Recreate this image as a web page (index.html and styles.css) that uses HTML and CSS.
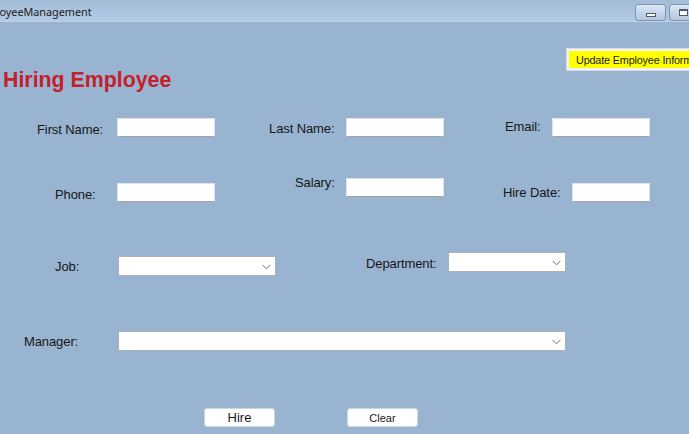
FILE: index.html
```html
<!DOCTYPE html>
<html lang="en">
<head>
<meta charset="utf-8">
<title>EmployeeManagement</title>
<link rel="stylesheet" href="styles.css">
</head>
<body>
<div class="window">
  <div class="titlebar">
    <span class="title-text">EmployeeManagement</span>
    <div class="caption-buttons">
      <div class="cap-btn cap-min"><span class="min-glyph"></span></div>
      <div class="cap-btn cap-max"><span class="max-glyph"></span></div>
    </div>
  </div>

  <div class="header-row">
    <h1 class="heading">Hiring Employee</h1>
    <button class="update-btn">Update Employee Information</button>
  </div>

  <div class="row row-1">
    <label class="lbl l-first">First Name:</label>
    <div class="textbox tb-first"></div>
    <label class="lbl l-last">Last Name:</label>
    <div class="textbox tb-last"></div>
    <label class="lbl l-email">Email:</label>
    <div class="textbox tb-email"></div>
  </div>

  <div class="row row-2">
    <label class="lbl l-phone">Phone:</label>
    <div class="textbox tb-phone"></div>
    <label class="lbl l-salary">Salary:</label>
    <div class="textbox tb-salary"></div>
    <label class="lbl l-hire">Hire Date:</label>
    <div class="textbox tb-hire"></div>
  </div>

  <div class="row row-3">
    <label class="lbl l-job">Job:</label>
    <div class="combo cb-job"><svg class="chev" width="9" height="6" viewBox="0 0 9 6"><path d="M0.5 0.8 L4.5 4.8 L8.5 0.8" fill="none" stroke="#707070" stroke-width="1"/></svg></div>
    <label class="lbl l-dept">Department:</label>
    <div class="combo cb-dept"><svg class="chev" width="9" height="6" viewBox="0 0 9 6"><path d="M0.5 0.8 L4.5 4.8 L8.5 0.8" fill="none" stroke="#707070" stroke-width="1"/></svg></div>
  </div>

  <div class="row row-4">
    <label class="lbl l-mgr">Manager:</label>
    <div class="combo cb-mgr"><svg class="chev" width="9" height="6" viewBox="0 0 9 6"><path d="M0.5 0.8 L4.5 4.8 L8.5 0.8" fill="none" stroke="#707070" stroke-width="1"/></svg></div>
  </div>

  <div class="row row-5">
    <button class="btn btn-hire">Hire</button>
    <button class="btn btn-clear">Clear</button>
  </div>
</div>
</body>
</html>
```

FILE: styles.css
```css
html, body {
  margin: 0;
  padding: 0;
  overflow: hidden;
}
body {
  width: 689px;
  height: 434px;
  background: #99b4d1;
  font-family: "Liberation Sans", Arial, sans-serif;
  color: #1a1a1a;
}
.window {
  width: 689px;
  height: 434px;
  overflow: hidden;
}

/* title bar */
.titlebar {
  height: 22px;
  display: flex;
  align-items: flex-start;
  background: linear-gradient(#a3bcd8, #b4cbe5);
  border-bottom: 1px solid #bdd2ea;
  box-sizing: border-box;
  overflow: hidden;
}
.title-text {
  font-family: "Noto Sans", "Open Sans", sans-serif;
  font-size: 10.8px;
  line-height: 24px;
  color: #1c1c1c;
  margin-left: -26px;
  flex: 0 0 auto;
}
.caption-buttons {
  display: flex;
  margin-left: auto;
  margin-top: 4px;
  margin-right: -20px;
  gap: 3px;
}
.cap-btn {
  width: 29px;
  height: 15px;
  border: 1px solid #7d93ae;
  border-radius: 3px;
  background: linear-gradient(#dde8f4, #c3d4e8 55%, #b3c7df);
  display: flex;
  align-items: center;
  justify-content: center;
  flex: 0 0 auto;
}
.cap-max {
  width: 38px;
}
.min-glyph {
  width: 8px;
  height: 2px;
  margin-top: 4px;
  background: #fff;
  border: 1px solid #4a5d74;
}
.max-glyph {
  width: 7px;
  height: 4px;
  background: #fff;
  border: 1px solid #4a5d74;
  border-top-width: 2px;
  margin-right: 11px;
}

/* header */
.header-row {
  display: flex;
  align-items: flex-start;
}
.heading {
  flex: 0 0 565px;
  margin: 46px 0 0 3px;
  font-family: "Liberation Sans", Arial, sans-serif;
  font-weight: bold;
  font-size: 21.33px;
  line-height: 24px;
  color: #c4202c;
}
.update-btn {
  flex: 0 0 auto;
  width: 150px;
  height: 21px;
  margin-top: 27px;
  margin-left: -1px;
  padding: 0 0 0 7px;
  background: #ffff00;
  border: 2px solid #f2f2f2;
  box-shadow: 0 0 0 1px #d9dde2;
  font-family: "Liberation Sans", Arial, sans-serif;
  font-size: 10.8px;
  letter-spacing: -0.15px;
  color: #1a1a1a;
  text-align: left;
  white-space: nowrap;
}

/* rows */
.row {
  display: flex;
  align-items: flex-start;
}
.row-1 { margin-top: 26px; }
.row-2 { margin-top: 38px; }
.row-3 { margin-top: 50px; }
.row-4 { margin-top: 55px; }
.row-5 { margin-top: 57px; }

.lbl {
  flex: 0 0 auto;
  font-size: 13px;
  line-height: 15px;
  color: #161616;
  white-space: nowrap;
  letter-spacing: -0.1px;
}

.textbox {
  flex: 0 0 auto;
  height: 19px;
  box-sizing: border-box;
  background: #fff;
  border: 1px solid #dde3ea;
  border-bottom: 1px solid #9ba4ae;
}
.combo {
  flex: 0 0 auto;
  height: 20px;
  box-sizing: border-box;
  background: #fff;
  border: 1px solid #a9b1bb;
  display: flex;
  align-items: center;
  justify-content: flex-end;
}
.chev {
  margin-right: 4px;
  margin-top: 1px;
}

/* row 1 */
.l-first { margin: 4px 0 0 37px; width: 80px; }
.tb-first { width: 98px; }
.l-last { margin: 3px 0 0 54px; width: 77px; }
.tb-last { width: 98px; }
.l-email { margin: 1px 0 0 61px; width: 47px; }
.tb-email { width: 98px; }

/* row 2 */
.l-phone { margin: 12px 0 0 55px; width: 62px; }
.tb-phone { width: 98px; margin-top: 8px; }
.l-salary { margin: 0 0 0 80px; width: 51px; }
.tb-salary { width: 98px; margin-top: 3px; }
.l-hire { margin: 10px 0 0 59px; width: 69px; }
.tb-hire { width: 78px; margin-top: 8px; }

/* row 3 */
.l-job { margin: 7px 0 0 55px; width: 63px; }
.cb-job { width: 158px; margin-top: 4px; }
.l-dept { margin: 4px 0 0 90px; width: 82px; }
.cb-dept { width: 118px; }

/* row 4 */
.l-mgr { margin: 3px 0 0 24px; width: 94px; }
.cb-mgr { width: 448px; }

/* row 5 */
.btn {
  flex: 0 0 auto;
  width: 71px;
  height: 19px;
  padding: 0;
  background: #fff;
  border: 1px solid #cdd6e0;
  border-radius: 3px;
  font-family: "Liberation Sans", Arial, sans-serif;
  color: #1a1a1a;
}
.btn-hire { margin-left: 204px; font-size: 13px; }
.btn-clear { margin-left: 72px; font-size: 11px; }
```
